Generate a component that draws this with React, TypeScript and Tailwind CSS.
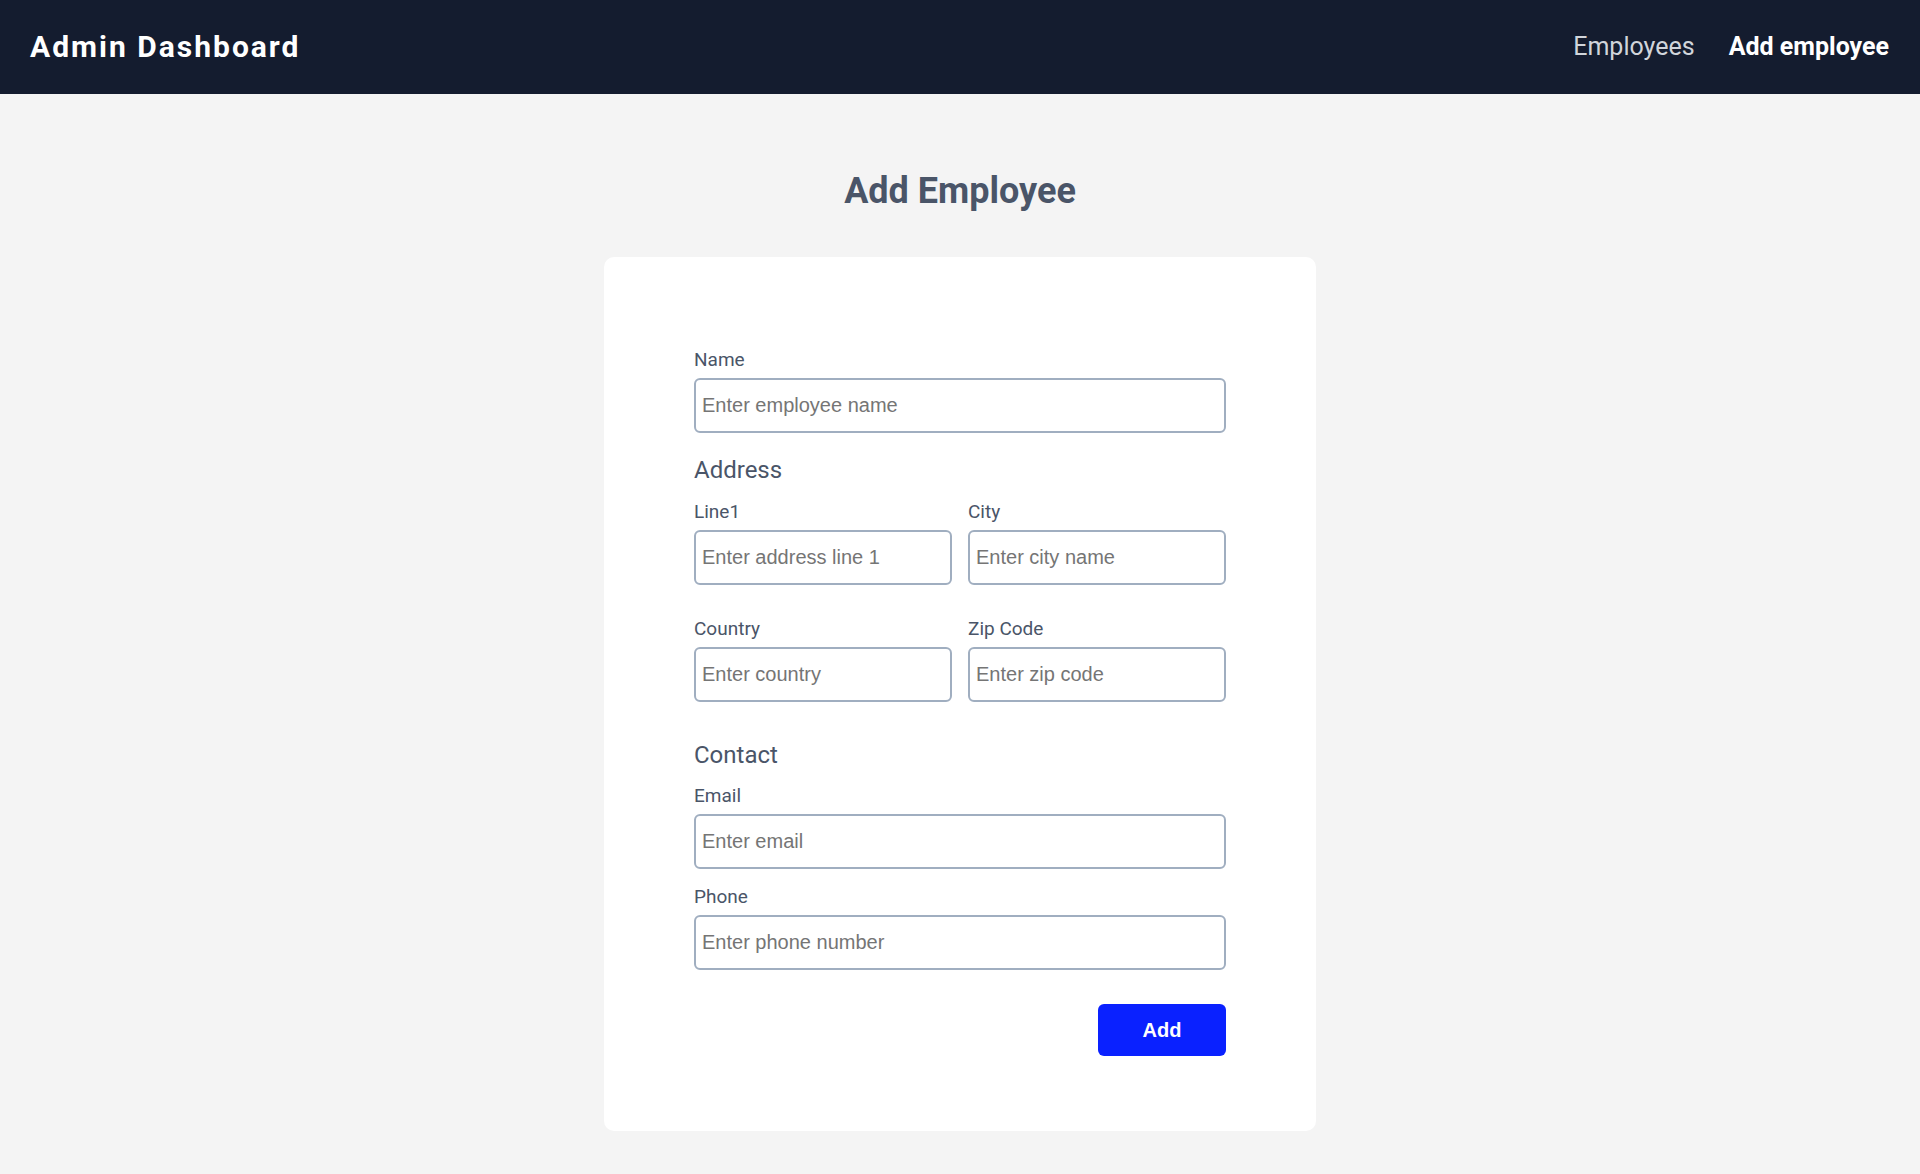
import React from "react";

const labelCls =
  "block text-[19px] leading-[24px] mb-[6px] text-[#4a5568] font-['Roboto',sans-serif]";
const inputCls =
  "block w-full h-[55px] border-2 border-[#a0aec0] rounded-[6px] bg-white px-[6px] text-[20px] text-[#333] placeholder:text-[#757575] font-['Liberation_Sans',Arial,sans-serif] outline-none";
const sectionCls =
  "text-[24px] leading-[32px] text-[#4a5568] font-['Roboto',sans-serif]";

function Field({ label, placeholder, type = "text" }: { label: string; placeholder: string; type?: string }) {
  return (
    <div>
      <label className={labelCls}>{label}</label>
      <input type={type} placeholder={placeholder} className={inputCls} />
    </div>
  );
}

export default function App() {
  return (
    <div className="min-h-screen bg-[#f4f4f4] font-['Roboto',sans-serif]">
      <header className="h-[94px] bg-[#141c2f] flex items-center justify-between pl-[30px] pr-[31px]">
        <div className="text-white text-[30px] leading-[36px] font-bold tracking-[2px]">Admin Dashboard</div>
        <nav className="flex items-center gap-[34px] text-[25px] leading-[32px]">
          <a className="text-[#d1d5db] cursor-pointer">Employees</a>
          <a className="text-white font-bold cursor-pointer">Add employee</a>
        </nav>
      </header>

      <main className="pt-[77px] pb-[45px]">
        <h1 className="text-center text-[36px] leading-[40px] font-bold text-[#4a5568]">Add Employee</h1>

        <div className="mt-[46px] mx-auto w-[712px] bg-white rounded-[10px] pt-[91px] pb-[75px]">
          <form className="w-[532px] mx-auto" onSubmit={(e) => e.preventDefault()}>
            <div className="mb-[21px]">
              <Field label="Name" placeholder="Enter employee name" />
            </div>

            <h2 className={sectionCls + " mb-[14px]"}>Address</h2>
            <div className="grid grid-cols-2 gap-x-4 gap-y-[32px] mb-[37px]">
              <Field label="Line1" placeholder="Enter address line 1" />
              <Field label="City" placeholder="Enter city name" />
              <Field label="Country" placeholder="Enter country" />
              <Field label="Zip Code" placeholder="Enter zip code" />
            </div>

            <h2 className={sectionCls + " mb-[13px]"}>Contact</h2>
            <div className="mb-[16px]">
              <Field label="Email" placeholder="Enter email" type="email" />
            </div>
            <div className="mb-[34px]">
              <Field label="Phone" placeholder="Enter phone number" />
            </div>

            <div className="flex justify-end">
              <button
                type="submit"
                className="w-[128px] h-[52px] rounded-[6px] bg-[#0a21ff] text-white text-[20px] font-bold font-['Liberation_Sans',Arial,sans-serif]"
              >
                Add
              </button>
            </div>
          </form>
        </div>
      </main>
    </div>
  );
}
